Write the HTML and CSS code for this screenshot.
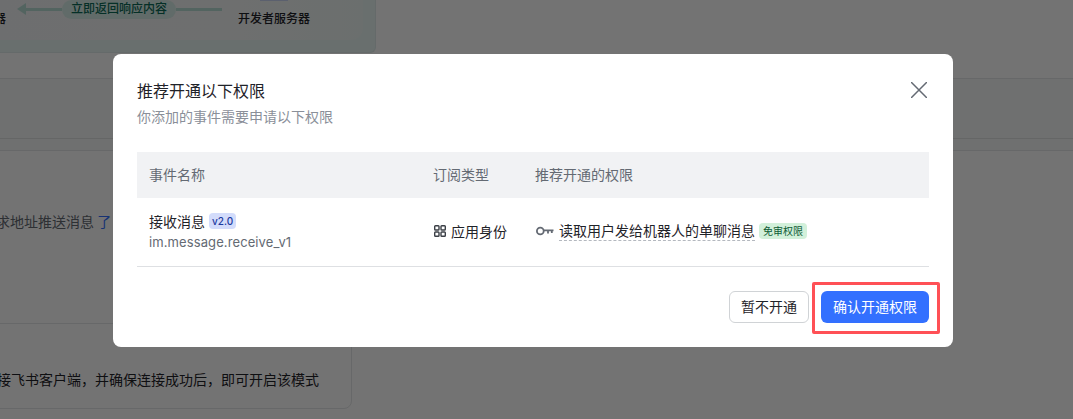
FILE: index.html
```html
<!DOCTYPE html>
<html lang="zh">
<head>
<meta charset="utf-8">
<title>推荐开通以下权限</title>
<link rel="stylesheet" href="styles.css">
</head>
<body>
<div class="page">
  <div class="flow-panel">
    <div class="flow-inner">
      <span class="server-left">器</span>
      <div class="arrow">
        <span class="arrow-head"></span><span class="arrow-line short"></span>
        <span class="arrow-label">立即返回响应内容</span>
        <span class="arrow-line long"></span>
      </div>
      <div class="server-right">
        <span class="server-icon"></span>
        <span class="server-name">开发者服务器</span>
      </div>
    </div>
  </div>
  <div class="band"></div>
  <div class="section">
    <p class="url-text">求地址推送消息 <a class="link">了</a></p>
    <div class="mode-card"><p class="mode-text">接飞书客户端，并确保连接成功后，即可开启该模式</p></div>
  </div>
</div>
<div class="overlay"></div>
<div class="dialog">
  <header class="dialog-head">
    <div>
      <h2 class="dialog-title">推荐开通以下权限</h2>
      <p class="dialog-sub">你添加的事件需要申请以下权限</p>
    </div>
    <svg class="close" viewBox="0 0 16 16" width="16" height="16"><path d="M.5.5l15 15M15.500.5l-15 15" fill="none" stroke="#646a73" stroke-width="1.500" stroke-linecap="round"/></svg>
  </header>
  <div class="table">
    <div class="row head-row">
      <div class="col-name">事件名称</div>
      <div class="col-type">订阅类型</div>
      <div class="col-perm">推荐开通的权限</div>
    </div>
    <div class="row body-row">
      <div class="col-name">
        <div class="event-name">接收消息<span class="version">v2.0</span></div>
        <div class="event-id">im.message.receive_v1</div>
      </div>
      <div class="col-type type-cell">
        <svg class="grid-icon" viewBox="0 0 12 12" width="12" height="12"><g fill="none" stroke="#3b3f46" stroke-width="1.400"><rect x=".7" y=".7" width="4.300" height="4.300" rx=".8"/><rect x="7" y=".7" width="4.300" height="4.300" rx=".8"/><rect x=".7" y="7" width="4.300" height="4.300" rx=".8"/><rect x="7" y="7" width="4.300" height="4.300" rx=".8"/></g></svg>
        应用身份
      </div>
      <div class="col-perm perm-cell">
        <svg class="key-icon" viewBox="0 0 18 10" width="18" height="10"><g fill="none" stroke="#646a73" stroke-width="1.800"><circle cx="4.300" cy="5" r="3.400"/><path d="M7.500 4.300h10M12 4.300v3.200M15.800 4.300v2.700"/></g></svg>
        <span class="perm-name">读取用户发给机器人的单聊消息</span>
        <span class="free-tag">免审权限</span>
      </div>
    </div>
  </div>
  <footer class="dialog-foot">
    <button class="btn btn-ghost">暂不开通</button>
    <span class="highlight"><button class="btn btn-primary">确认开通权限</button></span>
  </footer>
</div>
</body>
</html>
```
FILE: styles.css
```css
* { box-sizing: border-box; }
html, body { margin: 0; height: 100%; }
body {
  position: relative;
  width: 1073px;
  height: 419px;
  overflow: hidden;
  background: #fff;
  font-family: "Noto Sans CJK SC", "Noto Sans", sans-serif;
  font-size: 14px;
  color: #1f2329;
}
p { margin: 0; }
.page { height: 419px; display: flex; flex-direction: column; }
.flow-panel {
  width: 376px;
  height: 53px;
  flex: none;
  padding: 0 12px 12px 0;
  background: #e8f5f4;
  border: 1px solid #dfecea;
  border-width: 0 1px 1px 0;
  border-radius: 0 0 6px 0;
}
.flow-inner {
  display: flex;
  align-items: flex-start;
  height: 40px;
  background: linear-gradient(90deg, #f2f4f5, #f4f5f5 60%, #eef6f4);
  border-radius: 0 0 12px 0;
}
.server-left {
  width: 6px;
  margin-top: 9px;
  font-size: 12px;
  line-height: 18px;
  font-weight: 500;
  direction: rtl;
  overflow: hidden;
  white-space: nowrap;
}
.arrow { display: flex; align-items: center; margin-left: 11px; height: 18px; }
.arrow-head { width: 0; height: 0; border: 6px solid transparent; border-right: 9px solid #b9ded6; border-left: 0; }
.arrow-line { height: 3px; background: #b9ded6; }
.arrow-line.short { width: 36px; }
.arrow-line.long { width: 46px; }
.arrow-label {
  padding: 0 9px;
  height: 19px;
  line-height: 16px;
  font-size: 12px;
  font-weight: 500;
  color: #0c6b58;
  background: #d8eee8;
  border-radius: 10px;
}
.server-right { margin-left: 16px; display: flex; flex-direction: column; align-items: center; }
.server-icon { width: 28px; height: 1px; margin-bottom: 8px; background: #c9d4f4; }
.server-name { font-size: 12px; line-height: 18px; font-weight: 500; }
.band {
  height: 73px;
  margin-top: 25px;
  flex: none;
  background: linear-gradient(#f7f8f8 59px, #e0e2e3 59px, #e0e2e3 60px, #f7f8f8 60px);
  border-top: 1px solid #e4e6e8;
  border-bottom: 1px solid #e4e6e8;
}
.section { flex: 1; }
.url-text { padding-top: 59px; margin-left: -4px; line-height: 22px; color: #646a73; white-space: nowrap; }
.link { color: #3370ff; }
.mode-card {
  margin: 91px 0 0 -10px;
  width: 362px;
  height: 86px;
  padding: 44px 0 0 6px;
  border: 1px solid #e4e6e8;
  border-radius: 8px;
}
.mode-text { line-height: 22px; white-space: nowrap; }
.overlay { position: absolute; inset: 0; background: rgba(0, 0, 0, .55); }
.dialog {
  position: absolute;
  left: 113px;
  top: 54px;
  width: 840px;
  height: 293px;
  padding: 24px;
  background: #fff;
  border-radius: 8px;
  display: flex;
  flex-direction: column;
}
.dialog-head { display: flex; justify-content: space-between; align-items: flex-start; }
.dialog-title { margin: 0; font-size: 16px; line-height: 24px; font-weight: 400; color: #1f2329; }
.dialog-sub { margin: 3px 0 1px; line-height: 22px; color: #8a8f99; }
.close { margin: 4px 2px 0 0; }
.table { margin-top: 24px; border-bottom: 1px solid #dee0e3; }
.row { display: flex; }
.head-row { height: 46px; padding-bottom: 2px; align-items: center; background: #f1f2f4; color: #646a73; }
.body-row { height: 68px; padding-bottom: 2px; align-items: center; }
.col-name { width: 284px; padding-left: 12px; }
.col-type { width: 102px; padding-left: 12px; flex: none; }
.col-perm { flex: 1; padding-left: 12px; }
.event-name { line-height: 22px; display: flex; align-items: center; }
.version {
  margin-left: 4px;
  padding: 0 3px;
  height: 16px;
  line-height: 16px;
  font-size: 10px;
  font-family: "Inter", sans-serif;
  font-weight: 500;
  color: #1c3aa0;
  background: #d3dcfb;
  border-radius: 4px;
}
.event-id { line-height: 21px; color: #646a73; font-family: "Inter", "Noto Sans", sans-serif; font-size: 13px; letter-spacing: .1px; }
.type-cell { display: flex; align-items: center; }
.grid-icon { margin: 0 5px 0 1px; }
.perm-cell { display: flex; align-items: center; }
.key-icon { margin: 0 5px 0 1px; }
.perm-name { border-bottom: 1px dashed #b4b8bf; line-height: 19px; }
.free-tag {
  margin-left: 4px;
  padding: 0 4px;
  height: 16px;
  line-height: 15px;
  font-size: 10px;
  color: #0c5b35;
  background: #d2f0da;
  border-radius: 4px;
}
.dialog-foot { margin-top: auto; display: flex; justify-content: flex-end; align-items: flex-start; height: 32px; }
.btn { font-family: inherit; font-size: 14px; height: 32px; border-radius: 6px; padding: 0 0 2px; }
.btn-ghost { width: 80px; background: #fff; color: #1f2329; border: 1px solid #d0d3d6; }
.highlight {
  display: block;
  margin: -9px -11px -11px 3px;
  padding: 6px 8px 8px 6px;
  border: 3px solid #ff5056;
  border-radius: 2px;
}
.btn-primary { display: block; width: 108px; background: #3370ff; color: #fff; border: 0; }
```
